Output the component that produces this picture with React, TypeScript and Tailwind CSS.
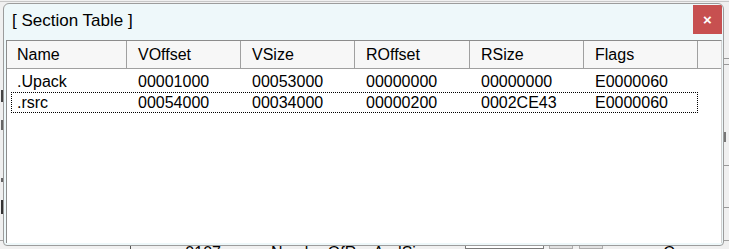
import React from 'react';

type Section = {
  name: string;
  vOffset: string;
  vSize: string;
  rOffset: string;
  rSize: string;
  flags: string;
};

const sections: Section[] = [
  { name: '.Upack', vOffset: '00001000', vSize: '00053000', rOffset: '00000000', rSize: '00000000', flags: 'E0000060' },
  { name: '.rsrc', vOffset: '00054000', vSize: '00034000', rOffset: '00000200', rSize: '0002CE43', flags: 'E0000060' },
];

const columns = [
  { label: 'Name', width: 'w-[120px] pl-[10px]' },
  { label: 'VOffset', width: 'w-[114px] pl-[11px]' },
  { label: 'VSize', width: 'w-[114px] pl-[11px]' },
  { label: 'ROffset', width: 'w-[115px] pl-[11px]' },
  { label: 'RSize', width: 'w-[114px] pl-[11px]' },
  { label: 'Flags', width: 'w-[114px] pl-[11px]' },
];

const font = { fontFamily: '"Liberation Sans", Arial, sans-serif' };

export default function App() {
  return (
    <div className="relative w-[729px] h-[249px] overflow-hidden bg-[#f0f0f0] text-black" style={font}>
      {/* Background app peeking out behind the dialog */}
      <div className="flex flex-col h-full">
        <div className="h-[2px] border-b border-[#c8c8c8]" />
        <div className="flex flex-1 justify-between">
          <div className="w-[3px] flex flex-col items-end pt-[88px] gap-[18px]">
            <div className="w-[2px] h-[12px] bg-[#444]" />
            <div className="w-[2px] h-[10px] bg-[#666]" />
            <div className="w-[2px] h-[4px] bg-[#666] mt-[30px]" />
            <div className="w-[2px] h-[14px] bg-[#333]" />
          </div>
          <div className="w-[6px] flex flex-col pt-[56px] gap-[5px]">
            <div className="h-px bg-[#999]" />
            <div className="h-px bg-[#999]" />
            <div className="h-[10px] w-[3px] bg-[#777] mt-[62px]" />
            <div className="h-px bg-[#999] mt-[18px]" />
            <div className="h-px bg-[#999] mt-[36px]" />
          </div>
        </div>
        <div className="h-[9px] flex items-start border-t border-[#a0a0a0] text-[16px] leading-[16px] overflow-hidden">
          <div className="w-[132px] h-full border-r border-[#555]" />
          <div className="pl-[54px] pt-[4px]">0107</div>
          <div className="pl-[50px] pt-[4px]">NumberOfRvaAndSizes</div>
          <div className="ml-[24px] w-[80px] h-full border border-[#7a7a7a] bg-white" />
          <div className="ml-[5px] w-[24px] h-full border border-[#adadad] bg-[#e1e1e1]" />
          <div className="ml-[6px] w-[24px] h-full border border-[#adadad] bg-[#e1e1e1]" />
          <div className="pl-[60px] pt-[4px]">Compare</div>
        </div>
      </div>

      {/* Section Table dialog */}
      <div className="absolute left-[3px] top-[3px] w-[721px] h-[243px] flex flex-col border border-[#9c9c9c] rounded-t-[6px] rounded-b-[4px] bg-[#eef8fa] overflow-hidden">
        <div className="flex h-[36px] shrink-0 justify-between">
          <div className="pl-[8px] pt-[7px] text-[17px] leading-[20px]">[ Section Table ]</div>
          <div className="mt-[1px] mr-[1px] w-[29px] h-[29px] bg-[#c75050] flex items-center justify-center text-white text-[15px] font-bold leading-none">
            ×
          </div>
        </div>

        <div className="flex-1 ml-[2px] mr-[1px] mb-[2px] bg-white border-t border-l border-[#8c8c8c] border-r border-r-[#d0d0d0] overflow-hidden">
          {/* Header */}
          <div className="flex h-[28px] bg-[#f7f7f7] border-b border-[#a0a0a0]">
            {columns.map(col => (
              <div key={col.label} className={`${col.width} shrink-0 flex items-center text-[16px] border-r border-[#a0a0a0]`}>
                {col.label}
              </div>
            ))}
            <div className="flex-1" />
          </div>

          {/* Rows */}
          <div className="pt-[2px]">
            {sections.map((s, idx) => (
              <div key={s.name} className="relative flex h-[21px] items-center text-[16px]">
                {[s.name, s.vOffset, s.vSize, s.rOffset, s.rSize, s.flags].map((v, i) => (
                  <div key={i} className={`${columns[i].width} shrink-0`}>
                    {v}
                  </div>
                ))}
                {idx === 1 && (
                  <div className="absolute left-[4px] top-0 w-[687px] h-[21px] border border-dotted border-black pointer-events-none" />
                )}
              </div>
            ))}
          </div>
        </div>
      </div>
    </div>
  );
}
